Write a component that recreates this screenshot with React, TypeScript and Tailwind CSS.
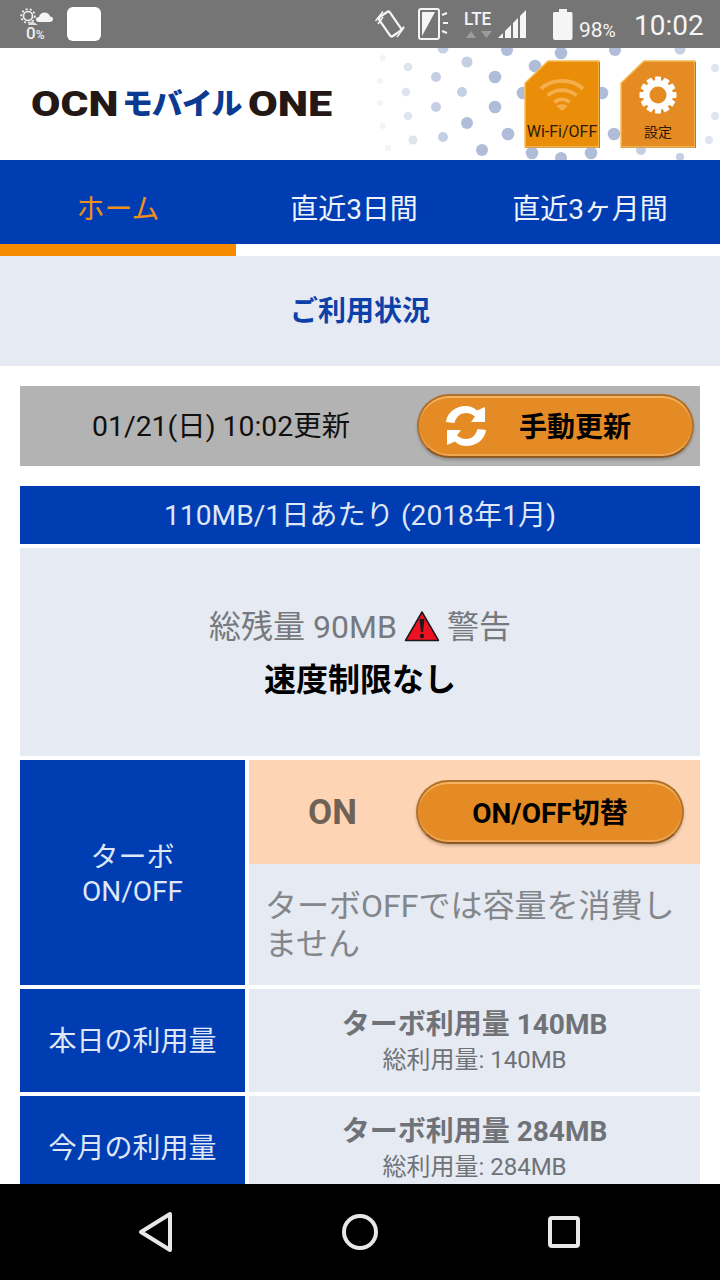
import React from 'react'

const faint = '#f1f3f8'
const light = '#dfe4ef'
const mid = '#c5cfe3'
const dark = '#b0bdd9'

const dots: [number, number, number, string][] = [
  [443, 48, 5.5, mid], [507, 50, 6, dark], [561, 53, 6.3, dark], [615, 50, 6, dark], [680, 49, 5.5, mid],
  [383, 58, 3, faint], [408, 67, 4.3, light], [436, 77, 5, mid], [467, 62, 5.5, mid], [495, 77, 6.3, dark], [535, 66, 6.3, dark],
  [380, 81, 3, faint], [406, 92, 4.3, light], [462, 92, 5, mid], [495, 107, 6.3, dark], [436, 107, 5, mid], [408, 116, 4.3, light],
  [380, 103, 3, faint], [383, 126, 3, faint], [467, 123, 6, dark], [413, 140, 4.5, light], [443, 137, 5, mid], [508, 134, 6.3, dark],
  [388, 148, 3, faint], [482, 150, 6, dark], [532, 153, 6.3, dark], [561, 158, 6, dark], [591, 153, 6.3, dark], [614, 134, 6.3, dark],
  [641, 150, 5, mid], [709, 140, 4, light], [715, 68, 4, light], [715, 116, 4, light], [680, 157, 4, mid], [523, 93, 6.3, dark], [602, 93, 6.3, dark],
]

function StatusBar() {
  return (
    <div className="relative h-12 shrink-0 bg-[#757575] text-white">
      <svg className="absolute left-[19px] top-[8px]" width="36" height="20" viewBox="0 0 36 20" fill="none">
        <circle cx="9" cy="8" r="4.500" stroke="#f2f2f2" strokeWidth="1.600" />
        <circle cx="9" cy="8" r="6.800" stroke="#f2f2f2" strokeWidth="1.800" strokeDasharray="2 2.200" />
        <path d="M13 13l6 4H9z" fill="#e0e0e0" />
        <path d="M20 14c-2 0-3-1-3-2.500s1-2.500 3-2.500c.5-3 3-4.500 5.500-4.500s5 1.500 5.500 4c2 0 3 1.200 3 2.700S32.500 14 30.500 14z" fill="#f5f5f5" />
      </svg>
      <span className="absolute left-[26px] top-[25px] text-[17px] leading-[17px] font-medium text-[#eeeeee]">0<span className="text-[12px]">%</span></span>
      <div className="absolute left-[67px] top-[7px] h-[34px] w-[34px] rounded-[6px] bg-white" />

      <svg className="absolute left-[374px] top-[8px]" width="32" height="32" viewBox="0 0 32 32" fill="none" stroke="#f5f5f5">
        <rect x="9.500" y="4.500" width="13" height="23" rx="2" strokeWidth="2.200" transform="rotate(-35 16 16)" />
        <path d="M1.500 13L9 3.500M4 16l5-7M23 29l7-9.500M26 24l4-5.500" strokeWidth="1.500" />
      </svg>
      <svg className="absolute left-[418px] top-[7px]" width="34" height="34" viewBox="0 0 34 34" fill="none">
        <rect x="1" y="2" width="20" height="30" rx="2" stroke="#f5f5f5" strokeWidth="2" />
        <path d="M4 29V5h13z" fill="#f5f5f5" />
        <path d="M24 8l5-2M25 16h5M24 24l5 2" stroke="#f5f5f5" strokeWidth="2" />
      </svg>
      <span className="absolute left-[464px] top-[9px] origin-left scale-x-[0.9] text-[19px] leading-[20px] font-medium text-[#f5f5f5]">LTE</span>
      <svg className="absolute left-[465px] top-[30px]" width="30" height="9" viewBox="0 0 30 9">
        <path d="M1 8l5-7 5 7z" fill="#9c9c9c" />
        <path d="M16 1h11l-5.500 7z" fill="#9c9c9c" />
      </svg>
      <svg className="absolute left-[497px] top-[9px]" width="30" height="30" viewBox="0 0 30 30" fill="#f5f5f5">
        <path d="M1 29l5-5v5z" />
        <path d="M8 29v-7l6-6v13z" />
        <path d="M16 29V14l5-5v20z" />
        <path d="M23 29V7l6-6v28z" />
      </svg>
      <svg className="absolute left-[553px] top-[9px]" width="20" height="31" viewBox="0 0 20 31">
        <path d="M6 0h8v3h4a1.500 1.500 0 011.500 1.500V29a2 2 0 01-2 2H2a2 2 0 01-2-2V4.500A1.500 1.500 0 011.500 3H6z" fill="#f5f5f5" />
      </svg>
      <span className="absolute left-[579px] top-[18px] text-[21px] leading-[24px] text-[#f5f5f5]">98<span className="text-[18px]">%</span></span>
      <span className="absolute left-[634px] top-[9px] text-[28px] leading-[34px] text-[#f5f5f5]">10:02</span>
    </div>
  )
}

function CornerButton({ fill, children, label, labelSize }: { fill: string; children: React.ReactNode; label: string; labelSize: string }) {
  return (
    <div className="relative h-[88px] w-[76px]">
      <svg className="absolute inset-0" width="76" height="88" viewBox="0 0 76 88">
        <path d="M24 1H75V87H1V23z" fill={fill} stroke="#f8bd5c" strokeWidth="1.500" />
        <path d="M75.500 2V88H1" fill="none" stroke="#b57a28" strokeWidth="1" />
      </svg>
      {children}
      <span className={`absolute inset-x-0 top-[63px] text-center leading-[18px] text-[#2b1a06] ${labelSize}`}>{label}</span>
    </div>
  )
}

function Header() {
  return (
    <div className="relative flex h-[112px] shrink-0 items-center justify-between overflow-hidden bg-white pl-[31px] pr-[24px]">
      <svg className="absolute left-0 top-[-48px]" width="720" height="160" viewBox="0 0 720 160">
        {dots.map(([cx, cy, r, c], i) => (
          <circle key={i} cx={cx} cy={cy} r={r} fill={c} />
        ))}
      </svg>
      <div className="relative flex h-[30px] w-[302px] items-center text-[34.500px] font-black leading-[30px]">
        <span className="w-[91px] origin-left scale-x-[1.235] text-[#231815]">OCN</span>
        <span className="w-[126px] origin-left scale-x-[1.03] text-[30px] tracking-[-1px] text-[#0b3a92]">モバイル</span>
        <span className="origin-left scale-x-[1.25] text-[#231815]">ONE</span>
      </div>
      <div className="relative flex gap-[20px]">
        <CornerButton fill="#ea8e0a" label="Wi-Fi/OFF" labelSize="text-[16px]">
          <svg className="absolute left-[15px] top-[17px]" width="46" height="35" viewBox="0 0 48 36" fill="none" stroke="#f4ae4b" strokeWidth="4">
            <path d="M2 12C14 1 34 1 46 12" />
            <path d="M9 19c9-7.500 21-7.500 30 0" />
            <path d="M16 26c5-4 11-4 16 0" />
            <path d="M24 35l-6-5c3.500-2.500 8.500-2.500 12 0z" fill="#f4ae4b" stroke="none" />
          </svg>
        </CornerButton>
        <CornerButton fill="#e58b24" label="設定" labelSize="text-[14px]">
          <svg className="absolute left-[19px] top-[16px]" width="38" height="38" viewBox="0 0 38 38">
            <g fill="#ffffff">
              {[0, 30, 60, 90, 120, 150].map((a) => (
                <rect key={a} x="16" y="0.500" width="6" height="37" rx="1" transform={`rotate(${a} 19 19)`} />
              ))}
              <circle cx="19" cy="19" r="15" />
            </g>
            <circle cx="19" cy="19" r="8.500" fill="#e58b24" />
          </svg>
        </CornerButton>
      </div>
    </div>
  )
}

function Tabs() {
  return (
    <div className="shrink-0">
      <div className="flex h-[84px] bg-[#003db2] pt-[16px] text-[28px] text-[#eef2fb]">
        <div className="flex w-[236px] items-center justify-center text-[#ec8f1c]">ホーム</div>
        <div className="flex w-[236px] items-center justify-center">直近3日間</div>
        <div className="flex w-[236px] items-center justify-center">直近3ヶ月間</div>
      </div>
      <div className="h-3 bg-white">
        <div className="h-3 w-[236px] bg-[#f78b00]" />
      </div>
    </div>
  )
}

function OrangeButton({ className, children }: { className: string; children: React.ReactNode }) {
  return (
    <div className={`flex items-center rounded-full border-2 border-[#b0722c] border-b-[#8f5a22] bg-[#e58b26] text-black shadow-[inset_0_2px_0_#f5b25f,inset_0_-2px_0_#f0a552,0_2px_3px_rgba(0,0,0,0.2)] ${className}`}>
      {children}
    </div>
  )
}

function Row({ label, h, children }: { label: React.ReactNode; h: string; children: React.ReactNode }) {
  return (
    <div className={`flex gap-1 ${h}`}>
      <div className="flex w-[225px] shrink-0 items-center justify-center bg-[#003db2] pt-[2px] text-center text-[28px] leading-[36px] text-[#dfe6f6]">{label}</div>
      <div className="min-w-0 flex-1">{children}</div>
    </div>
  )
}

function Usage({ turbo, total }: { turbo: string; total: string }) {
  return (
    <div className="flex h-full flex-col items-center bg-[#e6eaf3] pt-[16px] text-[#6f7276]">
      <div className="text-[28px] font-bold leading-[39px]">ターボ利用量 {turbo}</div>
      <div className="text-[24px] leading-[32px]">総利用量: {total}</div>
    </div>
  )
}

export default function App() {
  return (
    <div className="flex h-[1280px] w-[720px] flex-col overflow-hidden bg-white font-['Roboto','Noto_Sans_CJK_JP',sans-serif]">
      <StatusBar />
      <Header />
      <Tabs />
      <div className="flex-1 overflow-hidden">
        <div className="flex h-[110px] items-center justify-center bg-[#e6eaf3] pt-[2px] text-[28px] font-bold text-[#0d40a8]">ご利用状況</div>
        <div className="flex flex-col px-5 pt-5">
          <div className="flex h-20 items-center bg-[#b3b3b3] pl-[72px] pr-[6px]">
            <div className="pt-[3px] text-[28.400px] text-[#101010]">01/21(日) 10:02更新</div>
            <OrangeButton className="ml-auto h-[64px] w-[277px] pl-[26px]">
              <svg width="42" height="40" viewBox="0 0 42 40" fill="#ffffff">
                <path d="M1 16C2 7 10 0 21 0c4 0 8 1.500 11 4.500L40 1v15H26l4-5.500C27 8 24 7 21 7c-6 0-10 4-11.500 10z" />
                <path d="M1 16C2 7 10 0 21 0c4 0 8 1.500 11 4.500L40 1v15H26l4-5.500C27 8 24 7 21 7c-6 0-10 4-11.500 10z" transform="rotate(180 21 20)" />
              </svg>
              <span className="ml-[32px] pt-[3px] text-[28px] font-bold">手動更新</span>
            </OrangeButton>
          </div>
          <div className="mt-5 flex h-[58px] items-center justify-center bg-[#003db2] pt-[3px] text-[28.200px] text-[#dfe6f6]">110MB/1日あたり (2018年1月)</div>
          <div className="mt-1 flex h-[208px] flex-col items-center bg-[#e6eaf3] pt-[52px]">
            <div className="flex h-[54px] items-center text-[32px] text-[#76797d]">
              <span>総残量 90MB</span>
              <svg className="mx-[7px] mt-[-3px]" width="36" height="32" viewBox="0 0 36 32">
                <path d="M18 2L34.500 30.500H1.500z" fill="#ee1122" stroke="#1a1a1a" strokeWidth="1.500" strokeLinejoin="round" />
                <path d="M15.500 9h5l-1.500 13h-2z" fill="#1a1a1a" />
                <circle cx="18" cy="26" r="2.200" fill="#1a1a1a" />
              </svg>
              <span>警告</span>
            </div>
            <div className="text-[32px] font-bold leading-[52px] text-black">速度制限なし</div>
          </div>
          <div className="mt-1 flex flex-col gap-1">
            <Row h="h-[225px]" label={<div className="pt-[2px] leading-[34px]">ターボ<br />ON/OFF</div>}>
              <div className="flex h-[104px] items-center bg-[#fdd5b5] pl-[59px] pr-4">
                <span className="pt-[3px] text-[35px] font-bold text-[#6f6154]">ON</span>
                <OrangeButton className="ml-auto h-[64px] w-[268px] justify-center">
                  <span className="pt-[3px] text-[28px] font-bold">ON/OFF切替</span>
                </OrangeButton>
              </div>
              <div className="h-[121px] bg-[#e6eaf3] pl-[16px] pr-[20px] pt-[23px] text-[32px] leading-[38px] text-[#83868a]">ターボOFFでは容量を消費しません</div>
            </Row>
            <Row h="h-[103px]" label="本日の利用量">
              <Usage turbo="140MB" total="140MB" />
            </Row>
            <Row h="h-[103px]" label="今月の利用量">
              <Usage turbo="284MB" total="284MB" />
            </Row>
          </div>
        </div>
      </div>
      <div className="flex h-24 shrink-0 items-center bg-black">
        <svg className="ml-[136px]" width="40" height="44" viewBox="0 0 40 44" fill="none" stroke="#e8e8e8" strokeWidth="4" strokeLinejoin="round">
          <path d="M34 4v36L5 22z" />
        </svg>
        <svg className="ml-[164px]" width="40" height="40" viewBox="0 0 40 40" fill="none" stroke="#e8e8e8" strokeWidth="4">
          <circle cx="20" cy="20" r="16" />
        </svg>
        <svg className="ml-[166px]" width="36" height="36" viewBox="0 0 36 36" fill="none" stroke="#e8e8e8" strokeWidth="4" strokeLinejoin="round">
          <rect x="4" y="4" width="28" height="28" rx="2" />
        </svg>
      </div>
    </div>
  )
}
